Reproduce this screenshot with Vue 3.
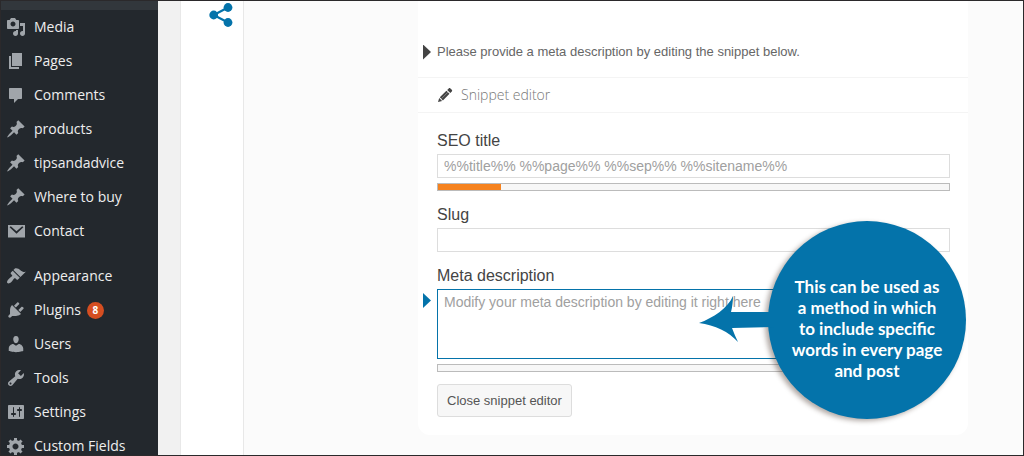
<script setup>
import { ref } from 'vue'

const pin = 'M10.44 3.02l1.82-1.82 6.36 6.35-1.83 1.82c-1.05-.68-2.48-.57-3.41.36l-.75.75c-.92.93-1.04 2.35-.35 3.41l-1.83 1.82-2.41-2.41-2.8 2.79c-.42.42-3.38 2.71-3.8 2.29s1.86-3.39 2.28-3.81l2.79-2.79L4.1 9.36l1.83-1.82c1.05.69 2.48.57 3.4-.36l.75-.75c.93-.92 1.05-2.35.36-3.41z'

const groups = [
  [
    { label: 'Media', icon: 'M13 11V4c0-.55-.45-1-1-1h-1.67L9 1H5L3.67 3H2c-.55 0-1 .45-1 1v7c0 .55.45 1 1 1h10c.55 0 1-.45 1-1zM7 4.5c1.38 0 2.5 1.12 2.5 2.5S8.38 9.5 7 9.5 4.5 8.38 4.5 7 5.62 4.5 7 4.5zM14 6h5v10.5c0 1.38-1.12 2.5-2.5 2.5S14 17.88 14 16.5s1.12-2.5 2.5-2.5c.17 0 .34.02.5.05V9h-3V6zm-4 8.05V13h2v3.5c0 1.38-1.12 2.5-2.5 2.5S7 17.88 7 16.5 8.12 14 9.5 14c.17 0 .34.02.5.05z' },
    { label: 'Pages', icon: 'M6 15V2h10v13H6zm-1 1h8v2H3V5h2v11z' },
    { label: 'Comments', icon: 'M4 3h11c.6 0 1 .4 1 1v9c0 .6-.4 1-1 1h-3l-4 4v-4H4c-.6 0-1-.4-1-1V4c0-.6.4-1 1-1z' },
    { label: 'products', icon: pin },
    { label: 'tipsandadvice', icon: pin },
    { label: 'Where to buy', icon: pin },
    { label: 'Contact', icon: 'M2 4h17v12.5H2zM3.6 6.2l6.9 6.6 6.9-6.6-1.2-1-5.7 5.1-5.7-5.1z' }
  ],
  [
    { label: 'Appearance', icon: 'M14.48 11.06L7.41 3.99l1.5-1.5c.5-.56 2.3-.47 3.51.32 1.21.8 1.43 1.28 2.91 2.1 1.18.64 2.45 1.26 4.45.85zm-.71.71L6.7 4.7 4.93 6.47c-.39.39-.39 1.02 0 1.41l1.06 1.06c.39.39.39 1.03 0 1.42-.6.6-1.43 1.11-2.21 1.69-.35.26-.7.53-1.01.84C1.43 14.23.4 16.08 1.4 17.07c.99 1 2.84-.03 4.18-1.36.31-.31.58-.66.85-1.02.57-.78 1.08-1.61 1.69-2.21.39-.39 1.02-.39 1.41 0l1.06 1.06c.39.39 1.02.39 1.41 0z' },
    { label: 'Plugins', count: 8, icon: 'M13.11 4.36L9.87 7.6 8 5.73l3.24-3.24c.35-.34 1.05-.2 1.56.32.52.51.66 1.21.31 1.55zm-8 1.77l.91-1.12 9.01 9.01-1.19.84c-.71.71-2.63 1.16-3.82 1.16H6.14L4.9 17.26c-.59.59-1.54.59-2.12 0-.59-.58-.59-1.53 0-2.12l1.24-1.24v-3.88c0-1.13.4-3.19 1.09-3.89zm7.26 3.97l3.24-3.24c.34-.35 1.04-.21 1.55.31.52.51.66 1.21.31 1.55l-3.24 3.25z' },
    { label: 'Users', icon: 'M10 9.25c-2.27 0-2.73-3.44-2.73-3.44C7 4.02 7.82 2 9.97 2c2.16 0 2.98 2.02 2.71 3.81 0 0-.41 3.44-2.68 3.44zm0 2.57L12.72 10c2.39 0 4.52 2.33 4.52 4.53v2.49s-3.65 1.13-7.24 1.13c-3.65 0-7.24-1.13-7.24-1.13v-2.49c0-2.25 1.94-4.48 4.47-4.48z' },
    { label: 'Tools', icon: 'M16.68 9.77c-1.34 1.34-3.3 1.67-4.95.99l-5.41 6.52c-.99.99-2.59.99-3.58 0s-.99-2.59 0-3.57l6.52-5.42c-.68-1.65-.35-3.61.99-4.95 1.28-1.28 3.12-1.62 4.72-1.06l-2.89 2.89 2.82 2.82 2.86-2.87c.53 1.58.18 3.39-1.08 4.65zM3.81 16.21c.4.39 1.04.39 1.43 0 .4-.4.4-1.04 0-1.43-.39-.4-1.03-.4-1.43 0-.39.39-.39 1.03 0 1.43z' },
    { label: 'Settings', icon: 'M18 16V4c0-.55-.45-1-1-1H3c-.55 0-1 .45-1 1v12c0 .55.45 1 1 1h14c.55 0 1-.45 1-1zM8 11h1c.55 0 1 .45 1 1s-.45 1-1 1H8v1.5c0 .28-.22.5-.5.5s-.5-.22-.5-.5V13H6c-.55 0-1-.45-1-1s.45-1 1-1h1V5.5c0-.28.22-.5.5-.5s.5.22.5.5V11zm5-2h-1c-.55 0-1-.45-1-1s.45-1 1-1h1V5.5c0-.28.22-.5.5-.5s.5.22.5.5V7h1c.55 0 1 .45 1 1s-.45 1-1 1h-1v5.5c0 .28-.22.5-.5.5s-.5-.22-.5-.5V9z' },
    { label: 'Custom Fields', icon: 'M18 12h-2.18c-.17.7-.44 1.35-.81 1.93l1.54 1.54-2.1 2.1-1.54-1.54c-.58.36-1.23.63-1.91.79V19H8v-2.18c-.68-.16-1.33-.43-1.91-.79l-1.54 1.54-2.12-2.12 1.54-1.54c-.36-.58-.63-1.23-.79-1.91H1V9.03h2.17c.16-.7.44-1.35.8-1.94L2.43 5.55l2.1-2.1 1.54 1.54c.58-.37 1.24-.64 1.93-.81V2h3v2.18c.68.16 1.33.43 1.91.79l1.54-1.54 2.12 2.12-1.54 1.54c.36.59.64 1.24.8 1.94H18V12zm-8.5 1.5c1.66 0 3-1.34 3-3s-1.34-3-3-3-3 1.34-3 3 1.34 3 3 3z' }
  ]
]

const seoTitle = ref('')
const slug = ref('')
const metaDescription = ref('')
</script>

<template>
  <div class="screen">
    <nav class="sidebar" aria-label="Admin menu">
      <ul v-for="(group, g) in groups" :key="g" class="menu">
        <li v-for="item in group" :key="item.label">
          <a href="#" class="menu-item">
            <svg class="icon" viewBox="0 0 20 20" aria-hidden="true"><path :d="item.icon" fill-rule="evenodd" /></svg>
            <span>{{ item.label }}</span>
            <span v-if="item.count" class="count">{{ item.count }}</span>
          </a>
        </li>
      </ul>
    </nav>

    <aside class="tabs">
      <button type="button" class="share" aria-label="Social">
        <svg viewBox="0 0 24 24" aria-hidden="true">
          <path d="M19 4.5L4.7 12L19 19.5" fill="none" stroke="#0473aa" stroke-width="2.2" />
          <circle cx="19" cy="4.5" r="4.4" />
          <circle cx="4.7" cy="12" r="4.4" />
          <circle cx="19" cy="19.5" r="4.4" />
        </svg>
      </button>
    </aside>

    <main class="content">
      <section class="card">
        <p class="notice"><span class="caret"></span>Please provide a meta description by editing the snippet below.</p>
        <h2 class="heading">
          <svg class="icon" viewBox="0 0 20 20" aria-hidden="true">
            <path d="M12.2 4.9l1.500-1.500c.5-.5 1.200-.5 1.700 0l1.400 1.400c.5.5.5 1.200 0 1.700l-1.500 1.500zM11.400 5.700l3.100 3.100-6.600 6.600-3.100-3.100zM4.200 13l2.900 2.900-4.100 1.200z" />
            <path d="M6.300 13.800l6.600-6.600" fill="none" stroke="#999" stroke-width=".7" />
          </svg>
          Snippet editor
        </h2>
        <form class="form" @submit.prevent>
          <div class="field">
            <label for="seo-title">SEO title</label>
            <input id="seo-title" v-model="seoTitle" type="text" placeholder="%%title%% %%page%% %%sep%% %%sitename%%">
            <progress class="meter" max="512" value="63" aria-label="SEO title length"></progress>
          </div>
          <div class="field">
            <label for="slug">Slug</label>
            <input id="slug" v-model="slug" type="text">
          </div>
          <div class="field">
            <label for="meta-description">Meta description</label>
            <div class="active-row">
              <span class="caret caret-active"></span>
              <textarea id="meta-description" v-model="metaDescription" placeholder="Modify your meta description by editing it right here"></textarea>
            </div>
            <progress class="meter" max="512" value="0" aria-label="Meta description length"></progress>
          </div>
          <button type="submit" class="close">Close snippet editor</button>
        </form>

        <div class="callout">
          <svg class="arrow" viewBox="0 0 76 50" aria-hidden="true"><path d="M0 27C14 22 29 12 34 0C34 6 33 12 32 16H76V31L33 32C35 37 37 42 39 46C30 36 16 29 0 27z" /></svg>
          <p class="bubble">This can be used as<br>a method in which<br>to include specific<br>words in every page<br>and post</p>
        </div>
      </section>
    </main>
  </div>
</template>

<style>
body {
  margin: 0;
}
</style>

<style scoped>
.screen {
  box-sizing: border-box;
  display: flex;
  height: 100vh;
  overflow: hidden;
  border: 1px solid #2b292b;
  background: #f1f1f1;
  font-family: "Liberation Sans", Arial, sans-serif;
  color: #444;
}
.sidebar {
  box-sizing: border-box;
  flex: 0 0 157px;
  border-top: 9px solid #32373c;
  background: #23282d;
  font: 14px/34px "Open Sans", "Noto Sans", sans-serif;
}
.menu {
  margin: 0 0 11px;
  padding: 0;
  list-style: none;
}
.menu-item {
  display: flex;
  align-items: center;
  height: 34px;
  padding-left: 5px;
  gap: 8px;
  color: #eee;
  text-decoration: none;
  white-space: nowrap;
}
.icon {
  flex: none;
  width: 20px;
  height: 20px;
  fill: #a0a5aa;
}
.count {
  width: 17px;
  height: 17px;
  margin-left: -2px;
  border-radius: 50%;
  background: #d54e21;
  color: #fff;
  font-size: 10px;
  font-weight: 700;
  line-height: 17px;
  text-align: center;
}
.tabs {
  flex: 0 0 62px;
  margin-left: 22px;
  border: solid #e8e8e8;
  border-width: 0 1px;
  background: #fff;
}
.share {
  display: block;
  margin: 2px 0 0 28px;
  padding: 0;
  border: 0;
  background: none;
}
.share svg {
  display: block;
  width: 24px;
  height: 24px;
  fill: #0473aa;
}
.content {
  flex: 1;
  min-width: 0;
  padding: 0 55px 0 174px;
  background: #fbfbfb;
}
.card {
  position: relative;
  padding-bottom: 18px;
  border-radius: 0 0 12px 12px;
  background: #fff;
}
.notice {
  display: flex;
  align-items: center;
  gap: 6px;
  margin: 0;
  padding: 41px 5px 15px;
  border-bottom: 1px solid #f4f4f4;
  font-size: 13px;
  line-height: 20px;
  color: #666;
}
.caret {
  flex: none;
  width: 8px;
  height: 15px;
  background: #444;
  clip-path: polygon(0 0, 100% 50%, 0 100%);
}
.caret-active {
  margin-top: 4px;
  background: #0473aa;
}
.heading {
  display: flex;
  align-items: center;
  gap: 6px;
  height: 34px;
  margin: 0;
  padding-left: 17px;
  border-bottom: 1px solid #f4f4f4;
  font: 300 14px/20px "Open Sans", "Noto Sans", sans-serif;
  color: #777;
}
.heading .icon {
  fill: #444;
}
.form {
  padding: 18px 18px 0 19px;
}
.field {
  display: flex;
  flex-direction: column;
  margin-bottom: 14px;
}
.field:last-of-type {
  margin-bottom: 12px;
}
.field label {
  margin-bottom: 3px;
  font-size: 16px;
  line-height: 20px;
}
.field input,
.field textarea {
  box-sizing: border-box;
  width: 100%;
  margin: 0;
  padding: 0 6px;
  border: 1px solid #ddd;
  border-radius: 0;
  outline: 0;
  background: #fff;
  color: #444;
  font: 14px/20px "Liberation Sans", Arial, sans-serif;
}
.field input {
  height: 24px;
}
.field textarea {
  display: block;
  height: 70px;
  padding: 2px 6px;
  border-color: #0473aa;
  resize: none;
}
.field ::placeholder {
  color: #a0a0a0;
  opacity: 1;
}
.active-row {
  display: flex;
  gap: 6px;
  margin-left: -14px;
}
.meter {
  appearance: none;
  box-sizing: border-box;
  display: block;
  width: 100%;
  height: 8px;
  margin-top: 5px;
  border: 1px solid #bbb;
  background: #f7f7f7;
}
.meter::-webkit-progress-bar {
  background: #f7f7f7;
}
.meter::-webkit-progress-value {
  background: #f5821f;
}
.close {
  display: block;
  height: 33px;
  padding: 0 9px;
  border: 1px solid #ddd;
  border-radius: 3px;
  background: #f7f7f7;
  color: #555;
  font: 13px/20px "Liberation Sans", Arial, sans-serif;
}
.callout {
  position: absolute;
  right: 2px;
  bottom: 16px;
}
.arrow {
  position: absolute;
  top: 75px;
  left: -69px;
  width: 76px;
  height: 50px;
  fill: #0473aa;
}
.bubble {
  display: flex;
  align-items: center;
  justify-content: center;
  box-sizing: border-box;
  width: 198px;
  height: 198px;
  margin: 0;
  padding-top: 16px;
  border-radius: 50%;
  background: #0473aa;
  box-shadow: -3px 2px 5px rgba(60, 40, 30, 0.4);
  color: #fff;
  font: 700 17px/21px Lato, "Open Sans", sans-serif;
  text-align: center;
}
</style>
